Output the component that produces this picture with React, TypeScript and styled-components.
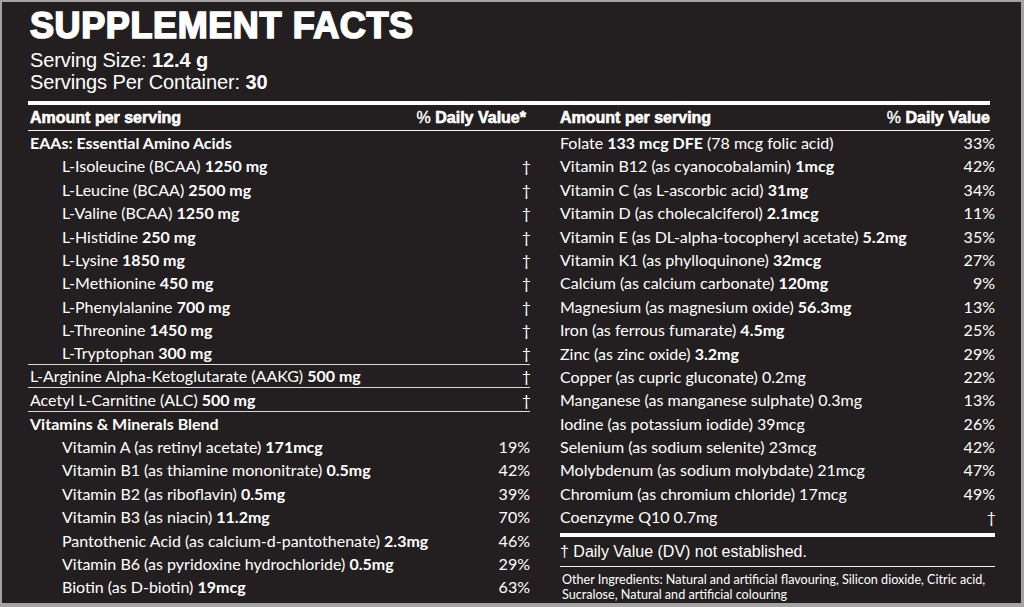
import React from "react";
import styled, { createGlobalStyle } from "styled-components";

const Global = createGlobalStyle`
  html, body { margin: 0; padding: 0; background: #a6a6a6; }
  * { box-sizing: border-box; }
`;

const Page = styled.div`
  width: 1024px;
  height: 607px;
  overflow: hidden;
  background: #231f20;
  border-style: solid;
  border-color: #a3a3a3;
  border-width: 2px 3px 4px 2px;
  padding: 5.5px 26px 0 26px;
  color: #ffffff;
`;

const Title = styled.h1`
  margin: 0 0 0 2px;
  font-family: "Liberation Sans", Arial, sans-serif;
  font-weight: 700;
  font-size: 36px;
  line-height: 36px;
  letter-spacing: 0.6px;
  -webkit-text-stroke: 1.7px #ffffff;
`;

const Serving = styled.div`
  margin: 5.5px 0 0 2px;
  font-family: "Liberation Sans", Arial, sans-serif;
  font-size: 20px;
  line-height: 22px;
  letter-spacing: -0.1px;
  b { font-weight: 700; }
`;

const ThickRule = styled.div<{ $end?: number }>`
  height: 4px;
  background: #ffffff;
  margin-right: ${(p) => p.$end ?? 0}px;
`;

const TopRule = styled(ThickRule)`
  margin-top: 8px;
`;

const HeaderRow = styled.div`
  display: grid;
  grid-template-columns: 502px 1fr;
  column-gap: 30px;
  margin-right: 5px;
  border-bottom: 1.5px solid #f2f2f2;
  padding: 2px 0 1px;
`;

const HeaderCell = styled.div<{ $first?: boolean }>`
  display: flex;
  justify-content: space-between;
  align-items: baseline;
  padding-left: ${(p) => (p.$first ? 2 : 0)}px;
  padding-right: ${(p) => (p.$first ? 4 : 0)}px;
  font-family: "Liberation Sans", Arial, sans-serif;
  font-weight: 700;
  font-size: 16px;
  line-height: 22px;
  -webkit-text-stroke: 0.6px #ffffff;
`;

const Pct = styled.span`
  font-weight: 400;
  -webkit-text-stroke: 0.4px #ffffff;
`;

const Body = styled.div`
  display: grid;
  grid-template-columns: 502px 435px;
  column-gap: 30px;
  align-items: start;
`;

const Column = styled.div`
  display: flex;
  flex-direction: column;
`;

const Row = styled.div<{ $indent?: boolean; $rule?: boolean; $flush?: boolean }>`
  height: 23.4px;
  display: flex;
  justify-content: space-between;
  align-items: center;
  padding-left: ${(p) => (p.$flush ? 0 : p.$indent ? 34 : 2)}px;
  border-bottom: ${(p) => (p.$rule ? "1.5px solid #d9d9d9" : "none")};
  font-family: Lato, "Open Sans", sans-serif;
  font-size: 16px;
  line-height: 23.4px;
  white-space: nowrap;
  b { font-weight: 700; }
`;

const Heading = styled.span`
  font-weight: 700;
`;

const Value = styled.span<{ $dagger?: boolean }>`
  margin-right: ${(p) => (p.$dagger ? -1 : 0)}px;
`;

const FootRule = styled(ThickRule)`
  margin-top: 4px;
`;

const Footnote = styled.div`
  padding: 3px 0 2px;
  border-bottom: 1.5px solid #f2f2f2;
  font-family: "Liberation Sans", Arial, sans-serif;
  font-size: 16px;
  line-height: 24px;
`;

const Other = styled.div`
  padding: 6.5px 0 0 2px;
  font-family: Lato, "Open Sans", sans-serif;
  font-size: 12.6px;
  line-height: 14.5px;
  white-space: nowrap;
`;

type Item = {
  pre: string;
  bold?: string;
  post?: string;
  val: string;
  indent?: boolean;
  rule?: boolean;
  heading?: boolean;
};

const left: Item[] = [
  { pre: "EAAs: Essential Amino Acids", val: "", heading: true },
  { pre: "L-Isoleucine (BCAA) ", bold: "1250 mg", val: "†", indent: true },
  { pre: "L-Leucine (BCAA) ", bold: "2500 mg", val: "†", indent: true },
  { pre: "L-Valine (BCAA) ", bold: "1250 mg", val: "†", indent: true },
  { pre: "L-Histidine ", bold: "250 mg", val: "†", indent: true },
  { pre: "L-Lysine ", bold: "1850 mg", val: "†", indent: true },
  { pre: "L-Methionine ", bold: "450 mg", val: "†", indent: true },
  { pre: "L-Phenylalanine ", bold: "700 mg", val: "†", indent: true },
  { pre: "L-Threonine ", bold: "1450 mg", val: "†", indent: true },
  { pre: "L-Tryptophan ", bold: "300 mg", val: "†", indent: true, rule: true },
  { pre: "L-Arginine Alpha-Ketoglutarate (AAKG) ", bold: "500 mg", val: "†", rule: true },
  { pre: "Acetyl L-Carnitine (ALC) ", bold: "500 mg", val: "†", rule: true },
  { pre: "Vitamins & Minerals Blend", val: "", heading: true },
  { pre: "Vitamin A (as retinyl acetate) ", bold: "171mcg", val: "19%", indent: true },
  { pre: "Vitamin B1 (as thiamine mononitrate) ", bold: "0.5mg", val: "42%", indent: true },
  { pre: "Vitamin B2 (as riboflavin) ", bold: "0.5mg", val: "39%", indent: true },
  { pre: "Vitamin B3 (as niacin) ", bold: "11.2mg", val: "70%", indent: true },
  { pre: "Pantothenic Acid (as calcium-d-pantothenate) ", bold: "2.3mg", val: "46%", indent: true },
  { pre: "Vitamin B6 (as pyridoxine hydrochloride) ", bold: "0.5mg", val: "29%", indent: true },
  { pre: "Biotin (as D-biotin) ", bold: "19mcg", val: "63%", indent: true },
];

const right: Item[] = [
  { pre: "Folate ", bold: "133 mcg DFE", post: " (78 mcg folic acid)", val: "33%" },
  { pre: "Vitamin B12 (as cyanocobalamin) ", bold: "1mcg", val: "42%" },
  { pre: "Vitamin C (as L-ascorbic acid) ", bold: "31mg", val: "34%" },
  { pre: "Vitamin D (as cholecalciferol) ", bold: "2.1mcg", val: "11%" },
  { pre: "Vitamin E (as DL-alpha-tocopheryl acetate) ", bold: "5.2mg", val: "35%" },
  { pre: "Vitamin K1 (as phylloquinone) ", bold: "32mcg", val: "27%" },
  { pre: "Calcium (as calcium carbonate) ", bold: "120mg", val: "9%" },
  { pre: "Magnesium (as magnesium oxide) ", bold: "56.3mg", val: "13%" },
  { pre: "Iron (as ferrous fumarate) ", bold: "4.5mg", val: "25%" },
  { pre: "Zinc (as zinc oxide) ", bold: "3.2mg", val: "29%" },
  { pre: "Copper (as cupric gluconate) 0.2mg", val: "22%" },
  { pre: "Manganese (as manganese sulphate) 0.3mg", val: "13%" },
  { pre: "Iodine (as potassium iodide) 39mcg", val: "26%" },
  { pre: "Selenium (as sodium selenite) 23mcg", val: "42%" },
  { pre: "Molybdenum (as sodium molybdate) 21mcg", val: "47%" },
  { pre: "Chromium (as chromium chloride) 17mcg", val: "49%" },
  { pre: "Coenzyme Q10 0.7mg", val: "†" },
];

function renderRow(it: Item, i: number, flush?: boolean) {
  return (
    <Row key={i} $indent={it.indent} $rule={it.rule} $flush={flush}>
      {it.heading ? (
        <Heading>{it.pre}</Heading>
      ) : (
        <span>
          {it.pre}
          {it.bold && <b>{it.bold}</b>}
          {it.post}
        </span>
      )}
      <Value $dagger={it.val === "†"}>{it.val}</Value>
    </Row>
  );
}

export default function App() {
  return (
    <>
      <Global />
      <Page>
        <Title>SUPPLEMENT FACTS</Title>
        <Serving>
          <div>
            Serving Size: <b>12.4 g</b>
          </div>
          <div>
            Servings Per Container: <b>30</b>
          </div>
        </Serving>
        <TopRule $end={5} />
        <HeaderRow>
          <HeaderCell $first>
            <span>Amount per serving</span>
            <span>
              <Pct>%</Pct> Daily Value*
            </span>
          </HeaderCell>
          <HeaderCell>
            <span>Amount per serving</span>
            <span>
              <Pct>%</Pct> Daily Value
            </span>
          </HeaderCell>
        </HeaderRow>
        <Body>
          <Column>{left.map((it, i) => renderRow(it, i))}</Column>
          <Column>
            {right.map((it, i) => renderRow(it, i, true))}
            <FootRule />
            <Footnote>† Daily Value (DV) not established.</Footnote>
            <Other>
              Other Ingredients: Natural and artificial flavouring, Silicon dioxide, Citric acid,
              <br />
              Sucralose, Natural and artificial colouring
            </Other>
          </Column>
        </Body>
      </Page>
    </>
  );
}
